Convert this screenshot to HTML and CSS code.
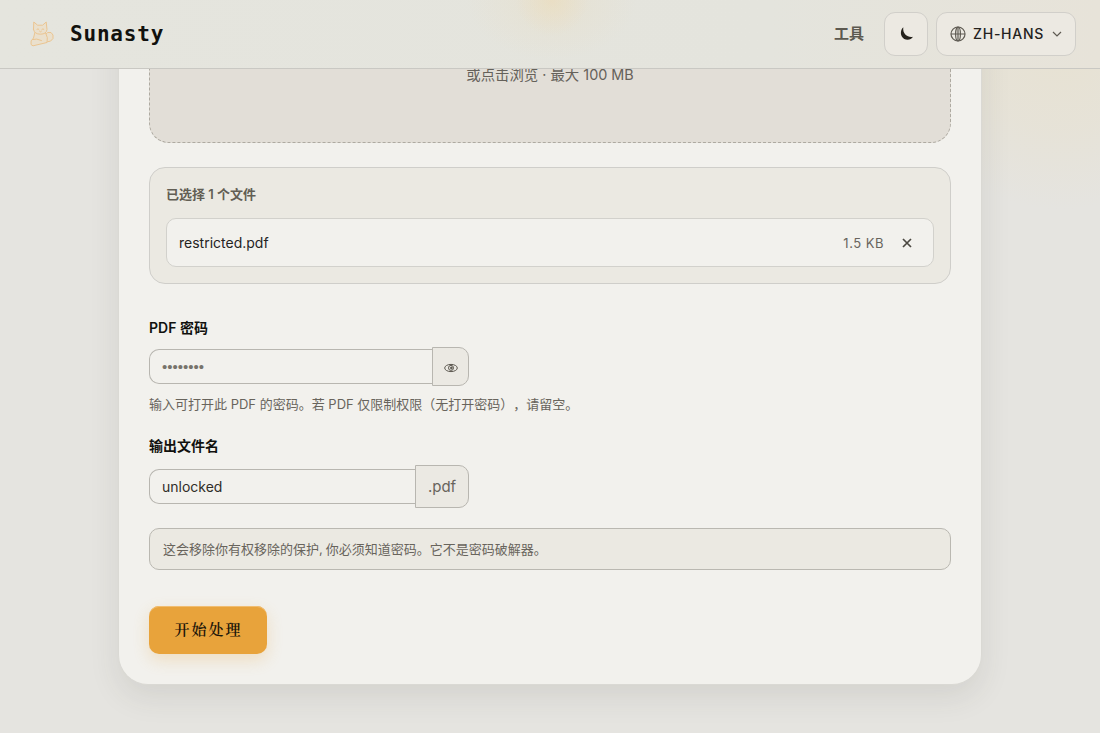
FILE: index.html
```html
<!DOCTYPE html>
<html lang="zh-Hans">
<head>
  <meta charset="utf-8">
  <meta name="viewport" content="width=device-width, initial-scale=1">
  <title>Sunasty</title>
  <link rel="stylesheet" href="styles.css">
</head>
<body>
  <header class="topbar">
    <a class="brand">
      <svg class="brand-logo" viewBox="0 0 28 28" fill="#eae0cd" stroke="#ebc591" stroke-width="1" stroke-linecap="round" stroke-linejoin="round">
        <path d="M17 15q2.500-4 6-2.500 3 2 2 6-1.500 3.500-6.500 3.500"/>
        <path d="M7 12 5.500 18q-3.500 2.500-2.500 6.500 1.500 2.400 5 .6L19 22.500q1.500-4.500-1.500-10"/>
        <path d="M5.500 9.500 5.800 2l3.800 3.200h5L18.200 2l.8 7.500q-.6 4.700-6.600 4.700T5.500 9.500Z"/>
        <path fill="none" d="M9 9.200q1-.8 1.800 0M14 9.200q1-.8 1.800 0M11.600 11.200l.9.600.9-.6M4.500 19.500q4-1.500 9 1"/>
      </svg>
      <span class="brand-name">Sunasty</span>
    </a>
    <nav class="nav">
      <a class="nav-link">工具</a>
      <button class="icon-btn" type="button" aria-label="主题">
        <svg width="16" height="16" viewBox="0 0 16 16"><path d="M4.300 1.200C.8 4.500 1.200 10.400 5.200 12.900c3.400 1.700 7.200.6 8.800-2.200C9.500 11.900 3.300 8.500 4.300 1.200Z" fill="#24211b"/></svg>
      </button>
      <button class="lang-btn" type="button">
        <svg width="16" height="16" viewBox="0 0 16 16" fill="none" stroke="#5e5a52" stroke-width="1.200"><circle cx="8" cy="8" r="7"/><ellipse cx="8" cy="8" rx="2.400" ry="7"/><path d="M1 8h14M8 1v14"/></svg>
        <span>ZH-HANS</span>
        <svg class="chevron" width="10" height="10" viewBox="0 0 10 10" fill="none" stroke="#5e5a52" stroke-width="1.200"><path d="m1 3 4 4 4-4"/></svg>
      </button>
    </nav>
  </header>

  <main class="card">
    <div class="dropzone">
      <p>或点击浏览 · 最大 100 MB</p>
    </div>

    <section class="files">
      <h3 class="files-title">已选择 1 个文件</h3>
      <div class="file">
        <span class="file-name">restricted.pdf</span>
        <span class="file-size">1.5 KB</span>
        <button class="file-remove" type="button" aria-label="移除">
          <svg width="10" height="10" viewBox="0 0 10 10" stroke="#4b4841" stroke-width="1.700"><path d="m1 1 8 8M9 1 1 9"/></svg>
        </button>
      </div>
    </section>

    <div class="field">
      <label class="label" for="password">PDF 密码</label>
      <div class="group password">
        <input class="input" id="password" type="text" placeholder="••••••••">
        <button class="addon eye" type="button" aria-label="显示密码">
          <svg width="14" height="10" viewBox="0 0 14 10" fill="none" stroke="#5b574f"><ellipse cx="7" cy="5" rx="6.300" ry="3.600"/><circle cx="7" cy="4.900" r="2.500"/><circle cx="7.400" cy="4.900" r=".9" fill="#5b574f"/></svg>
        </button>
      </div>
      <p class="hint">输入可打开此 PDF 的密码。若 PDF 仅限制权限（无打开密码），请留空。</p>
    </div>

    <div class="field">
      <label class="label" for="output">输出文件名</label>
      <div class="group output">
        <input class="input" id="output" type="text" value="unlocked">
        <span class="addon suffix">.pdf</span>
      </div>
    </div>

    <p class="notice">这会移除你有权移除的保护<span class="comma">,</span>你必须知道密码。它不是密码破解器。</p>

    <button class="submit" type="button">开始处理</button>
  </main>
</body>
</html>
```
FILE: styles.css
```css
* {
  box-sizing: border-box;
}

body {
  margin: 0;
  height: 733px;
  overflow: hidden;
  color: #25231f;
  font-family: Inter, "Noto Sans CJK SC", sans-serif;
  text-spacing-trim: space-all;
  background:
    radial-gradient(circle at 1060px 40px, rgba(234, 222, 190, .4), rgba(234, 222, 190, .25) 90px, transparent 170px),
    #e5e4e0;
}

p, h3 {
  margin: 0;
}

button, input {
  font: inherit;
}

/* header */
.topbar {
  position: fixed;
  top: 0;
  left: 0;
  right: 0;
  z-index: 10;
  display: flex;
  align-items: center;
  justify-content: space-between;
  height: 69px;
  padding: 0 24px 0 28px;
  border-bottom: 1px solid #c9c8c3;
  background:
    radial-gradient(ellipse 36px 36px at 552px 0, rgba(238, 218, 176, .4), transparent),
    radial-gradient(ellipse 85px 60px at 552px 0, rgba(234, 221, 192, .4), transparent),
    linear-gradient(90deg, #e5e5de 0, #e4e4dd 70%, #e7e3d9 100%);
}

.brand {
  display: flex;
  align-items: center;
  gap: 14px;
}

.brand-logo {
  width: 28px;
  height: 28px;
}

.brand-name {
  font-family: "DejaVu Sans Mono", monospace;
  font-size: 21px;
  font-weight: 700;
  letter-spacing: .8px;
  color: #11110e;
}

.nav {
  display: flex;
  align-items: center;
}

.nav-link {
  margin: -3px 20px 0 0;
  font-size: 15px;
  font-weight: 700;
  color: #5c5950;
}

.icon-btn,
.lang-btn {
  display: flex;
  align-items: center;
  height: 44px;
  border: 1px solid #d1cfca;
  border-radius: 11px;
  background: #ece9e2;
}

.icon-btn {
  justify-content: center;
  width: 44px;
  margin-right: 8px;
  padding: 0 0 1px 2px;
}

.lang-btn {
  width: 140px;
  padding: 0 13px;
  font-size: 14px;
  font-weight: 550;
  letter-spacing: .75px;
  color: #24221e;
}

.lang-btn span {
  margin: -1px 0 0 7px;
}

.chevron {
  margin-left: auto;
}

/* tool card */
.card {
  width: 864px;
  height: 685px;
  margin: 0 auto;
  padding: 0 30px;
  border: 1px solid #dad9d4;
  border-top: 0;
  border-radius: 0 0 30px 30px;
  background: #f2f1ed;
  box-shadow: 0 12px 30px rgba(60, 58, 48, .1);
}

.dropzone {
  height: 143px;
  padding-top: 64px;
  border: 1px dashed #aeaaa1;
  border-top: 0;
  border-radius: 0 0 20px 20px;
  background: #e2ded7;
  font-size: 14.4px;
  line-height: 22px;
  text-align: center;
  color: #65615a;
}

.files {
  height: 117px;
  margin-top: 24px;
  padding: 16px;
  border: 1px solid #cfceca;
  border-radius: 16px;
  background: #ebe9e2;
}

.files-title {
  margin-bottom: 13px;
  font-size: 13px;
  font-weight: 600;
  line-height: 21px;
  color: #625e54;
}

.file {
  display: flex;
  align-items: center;
  height: 49px;
  padding: 0 12px;
  border: 1px solid #d2d1cc;
  border-radius: 10px;
  background: #f2f1ed;
}

.file-name {
  flex: 1;
  font-size: 14px;
}

.file-size {
  font-size: 13px;
  letter-spacing: .5px;
  color: #68645d;
}

.file-remove {
  display: flex;
  width: 28px;
  margin-left: 9px;
  justify-content: center;
  padding: 0;
  border: 0;
  background: none;
}

/* form */
.field {
  width: 320px;
}

.label {
  display: block;
  font-size: 14px;
  font-weight: 600;
  line-height: 22px;
  color: #11110e;
}

.files + .field {
  margin-top: 33px;
}

.field + .field {
  margin-top: 20px;
}

.group {
  display: flex;
  align-items: center;
}

.password,
.output {
  margin-top: 8px;
}

.input {
  flex: 1;
  min-width: 0;
  height: 35px;
  padding: 0 12px;
  border: 1px solid #b8b6b0;
  border-right: 0;
  border-radius: 10px 0 0 10px;
  outline: 0;
  background: #f2f1ed;
  font-size: 14px;
  color: #302d28;
}

.input::placeholder {
  font-family: "Liberation Sans", sans-serif;
  font-size: 15px;
  color: #77736b;
  opacity: 1;
}

.addon {
  display: flex;
  align-items: center;
  justify-content: center;
  border: 1px solid #b8b6b0;
  border-radius: 0 10px 10px 0;
  background: #ebe9e3;
  color: #68645d;
}

.eye {
  width: 37px;
  height: 39px;
  padding: 2px 0 0;
}

.suffix {
  width: 54px;
  height: 43px;
  font-size: 15px;
}

.hint {
  margin-top: 8px;
  font-size: 13px;
  line-height: 21px;
  white-space: nowrap;
  color: #68645c;
}

.notice {
  height: 42px;
  margin-top: 20px;
  padding: 0 13px;
  border: 1px solid #bab8b1;
  border-radius: 10px;
  background: #ebe9e2;
  font-size: 13px;
  line-height: 41px;
  color: #68645c;
}

.comma {
  margin-right: 3px;
}

.submit {
  display: block;
  width: 118px;
  height: 48px;
  margin-top: 36px;
  padding: 0 0 3px 1px;
  border: 0;
  border-radius: 10px;
  background: #e8a33b;
  box-shadow: inset 0 1px 0 #f1bd70, 0 6px 16px rgba(232, 163, 59, .24);
  font-family: "Noto Serif CJK SC", "Noto Sans CJK SC", serif;
  font-size: 15px;
  font-weight: 600;
  letter-spacing: 2px;
  color: #1d160a;
}
```
